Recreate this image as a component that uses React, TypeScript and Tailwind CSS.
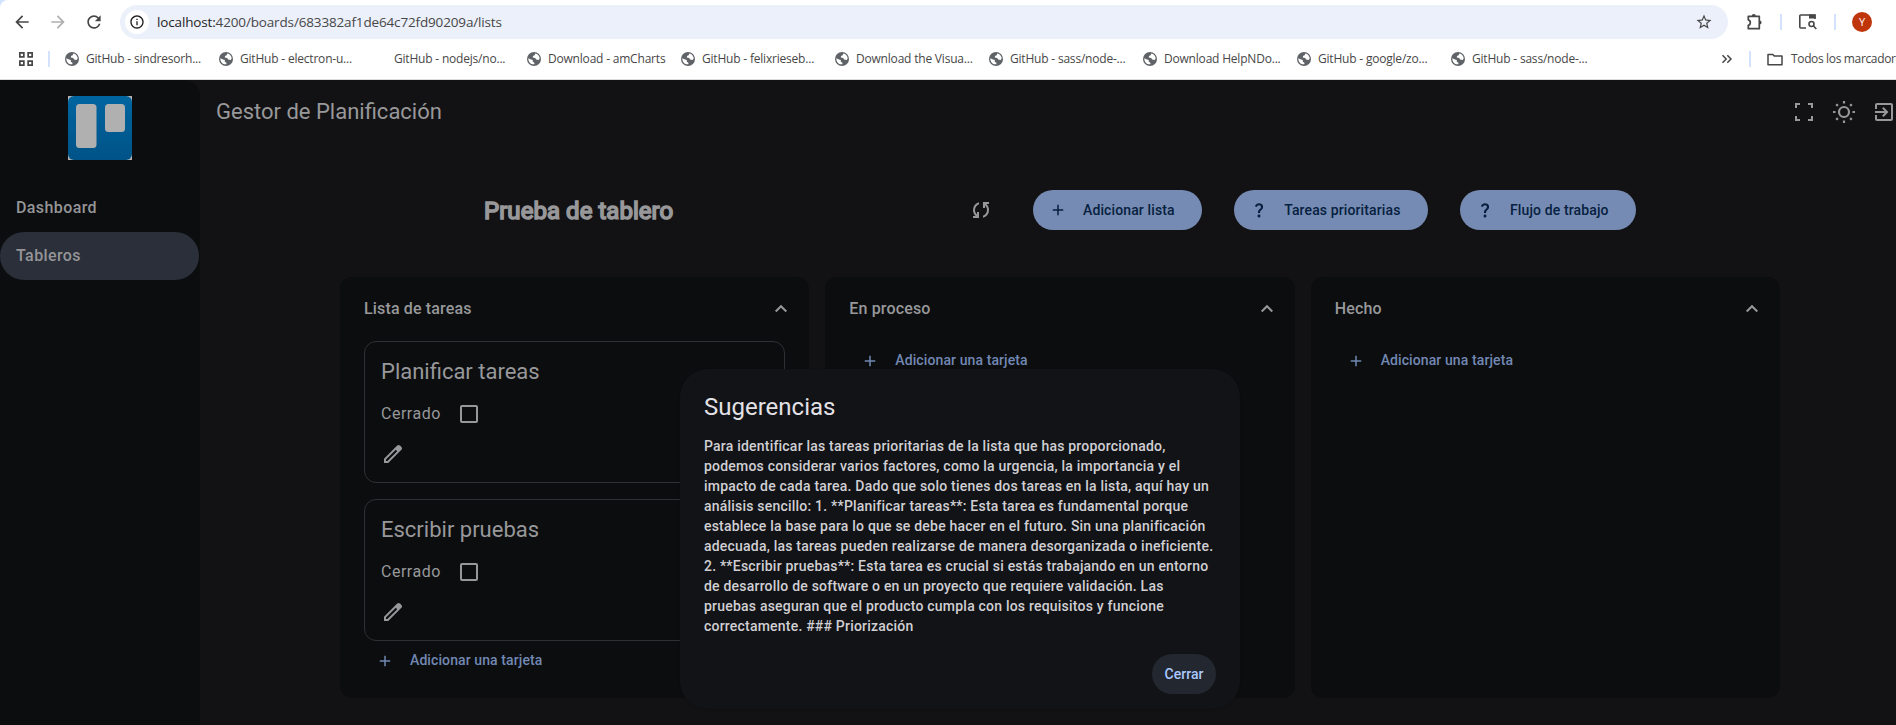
import React from "react";
import {
  MdArrowBack,
  MdArrowForward,
  MdRefresh,
  MdInfoOutline,
  MdStarOutline,
  MdOutlineExitToApp,
  MdAdd,
  MdQuestionMark,
} from "react-icons/md";

const bookmarks = [
  "GitHub - sindresorh...",
  "GitHub - electron-u...",
  "GitHub - nodejs/no...",
  "Download - amCharts",
  "GitHub - felixrieseb...",
  "Download the Visua...",
  "GitHub - sass/node-...",
  "Download HelpNDo...",
  "GitHub - google/zo...",
  "GitHub - sass/node-...",
];

function Globe() {
  return (
    <svg width="14" height="14" viewBox="0 0 14 14">
      <circle cx="7" cy="7" r="7" fill="#5f6368" />
      <path d="M1.300 6.200 4 7.500l1.800.6v1.700l1.600.9v1.600C4 12.700 1.200 10.200 1.300 6.200Z" fill="#fff" />
      <path d="M8.300 1.500 7.600 3.200 6 4 5.800 5.600l2.400.3.9 1.700 2.600.4 1-1.400C12.600 4 10.800 1.800 8.300 1.500Z" fill="#fff" />
    </svg>
  );
}

function Puzzle() {
  return (
    <svg width="18" height="18" viewBox="0 0 18 18" fill="none" stroke="#474747" strokeWidth="1.700" strokeLinejoin="round">
      <path d="M2.300 3.300h11v12.400h-11v-3.400c2.700-.6 2.700-4.900 0-5.500z" />
      <path d="M5.700 3.200a2.100 2.100 0 0 1 4.200 0zM13.500 7.400a2.100 2.100 0 0 1 0 4.200z" fill="#474747" stroke="none" />
    </svg>
  );
}

function Chevrons() {
  return (
    <svg width="12" height="12" viewBox="0 0 12 12" fill="none" stroke="#474747" strokeWidth="1.500" className="shrink-0">
      <path d="m1.500 2.300 3.700 3.700-3.700 3.700M6.300 2.300l3.700 3.700-3.700 3.700" />
    </svg>
  );
}

function Folder() {
  return (
    <svg width="16" height="13" viewBox="0 0 16 13" fill="none" stroke="#474747" strokeWidth="1.500" strokeLinejoin="round">
      <path d="M1 1.500h4.800l1.600 1.600H15v8.700H1z" />
    </svg>
  );
}

function Lens() {
  return (
    <svg width="18" height="16" viewBox="0 0 18 16" fill="none" stroke="#474747" strokeWidth="1.600">
      <path d="M7 14H1.800a1 1 0 0 1-1-1V2a1 1 0 0 1 1-1H16v4" />
      <path d="M10 .5h6.500v4H10z" fill="#474747" stroke="none" />
      <circle cx="12.500" cy="10" r="2.500" />
      <path d="m14.300 11.800 3 3.200" />
    </svg>
  );
}

function Symbol({ d }: { d: string }) {
  return (
    <svg width="24" height="24" viewBox="0 0 24 24" fill="currentColor" fillRule="evenodd" className="shrink-0">
      <path d={d} />
    </svg>
  );
}

const SYNC =
  "M4 20v-2h2.750l-.4-.35q-1.225-1.225-1.787-2.662T4 12.050q0-2.775 1.663-4.937T10 4.250v2.100Q8.200 7 7.100 8.563T6 12.050q0 1.125.425 2.188T7.750 16.200l.25.25V14h2v6zm10-.25v-2.100q1.800-.65 2.900-2.212T18 11.950q0-1.125-.425-2.187T16.250 7.800L16 7.550V10h-2V4h6v2h-2.750l.4.35q1.225 1.225 1.788 2.663T20 11.950q0 2.775-1.662 4.938T14 19.750z";
const FULLSCREEN = "M3 21v-5h2v3h3v2zm13 0v-2h3v-3h2v5zM3 8V3h5v2H5v3zm16 0V5h-3V3h5v5z";
const EDIT =
  "M5 19h1.425L16.200 9.225 14.775 7.800 5 17.575zm-2 2v-4.250L16.200 3.575q.3-.275.663-.425t.762-.15.775.15.650.45L20.425 5q.3.275.438.65T21 6.400q0 .4-.137.763t-.438.662L7.250 21z";

function Sun() {
  return (
    <svg width="24" height="24" viewBox="0 0 24 24" fill="none" stroke="currentColor" strokeWidth="2.200">
      <circle cx="12" cy="12" r="5" />
      <path d="M12 1v2.500M12 20.500V23M1 12h2.500M20.500 12H23M4.200 4.200l1.700 1.700M18.100 18.100l1.700 1.700M4.200 19.800l1.700-1.700M18.100 5.900l1.700-1.700" />
    </svg>
  );
}

function Browser() {
  return (
    <header className="h-20 shrink-0 bg-[#d3e3fd] font-['Open_Sans','Noto_Sans',sans-serif] text-[#474747]">
      <div className="h-20 overflow-hidden rounded-tl-lg border-b border-[#d9dbde] bg-white">
        <div className="flex h-[39px] items-end">
          <div className="flex h-[34px] w-[120px] shrink-0 items-center pl-3">
            <MdArrowBack size={20} />
            <MdArrowForward size={20} className="ml-4 text-[#b0b0b0]" />
            <MdRefresh size={20} className="ml-4" />
          </div>
          <div className="flex h-[34px] w-[1608px] shrink-0 items-center rounded-full bg-[#ebf0fa] pr-[15px] pl-[5px]">
            <span className="flex size-6 items-center justify-center rounded-full bg-white text-[#1f1f1f]">
              <MdInfoOutline size={16} />
            </span>
            <span className="ml-2 text-[13.500px] tracking-[-0.15px]">
              <span className="text-[#1f1f1f]">localhost:</span>4200/boards/683382af1de64c72fd90209a/lists
            </span>
            <MdStarOutline size={18} className="ml-auto" />
          </div>
          <div className="flex h-[34px] shrink-0 items-center pl-[18px]">
            <Puzzle />
            <i className="ml-4 h-4 w-0.5 bg-[#d3e3fd]" />
            <span className="ml-[17px]">
              <Lens />
            </span>
            <i className="ml-[17px] h-4 w-0.5 bg-[#d3e3fd]" />
            <b className="ml-4 flex size-5 items-center justify-center rounded-full bg-[#bf360c] text-[11px] font-normal text-white">
              Y
            </b>
          </div>
        </div>
        <div className="flex h-10 items-center text-[12px] tracking-[-0.2px] whitespace-nowrap">
          <svg width="14" height="14" viewBox="0 0 14 14" className="ml-[19px] shrink-0" fill="none" stroke="#474747" strokeWidth="1.700">
            <path d="M.85.85h4v4h-4zM9.150.85h4v4h-4zM.85 9.150h4v4h-4zM9.150 9.150h4v4h-4z" />
          </svg>
          <i className="ml-[15px] h-4 w-0.5 shrink-0 bg-[#d3e3fd]" />
          <div className="ml-[15px] flex shrink-0">
            {bookmarks.map((name, i) => (
              <div key={i} className="flex w-[154px] shrink-0 items-center gap-[7px]">
                <span className="w-[14px] shrink-0">{i !== 2 && <Globe />}</span>
                {name}
              </div>
            ))}
          </div>
          <span className="ml-[116px] w-[14px] shrink-0">
            <Chevrons />
          </span>
          <i className="ml-[14px] h-4 w-0.5 shrink-0 bg-[#d3e3fd]" />
          <span className="ml-4 shrink-0">
            <Folder />
          </span>
          <span className="ml-2 shrink-0 tracking-[-0.35px]">Todos los marcadores</span>
        </div>
      </div>
    </header>
  );
}

function Sidebar() {
  return (
    <aside className="flex w-[200px] shrink-0 flex-col rounded-tr-2xl bg-[#0b0d0f] text-[16px] font-medium tracking-[0.4px]">
      <svg width="64" height="64" viewBox="0 0 64 64" className="mt-4 ml-[68px]">
        <defs>
          <linearGradient id="tile" x1="0" y1="0" x2="0" y2="1">
            <stop offset="0" stopColor="#0065a0" />
            <stop offset="1" stopColor="#005387" />
          </linearGradient>
        </defs>
        <rect width="64" height="64" fill="#b2b2b2" />
        <rect width="64" height="64" rx="6" fill="url(#tile)" />
        <rect x="8" y="8" width="20.500" height="44" rx="3.500" fill="#b0b0b0" />
        <rect x="37" y="8" width="20" height="28" rx="3.500" fill="#b0b0b0" />
      </svg>
      <a className="mt-6 flex h-12 items-center pl-4 text-[#959597]">Dashboard</a>
      <a className="flex h-12 w-[199px] items-center rounded-full bg-[#2a2f3a] pl-4 text-[#959597]">Tableros</a>
    </aside>
  );
}

function AddCard() {
  return (
    <div className="flex h-[39px] items-center pl-3 text-[14px] font-medium tracking-[0.1px] text-[#7288b3]">
      <MdAdd size={18} />
      <span className="ml-4 pb-px">Adicionar una tarjeta</span>
    </div>
  );
}

function TaskCard({ title }: { title: string }) {
  return (
    <article className="mb-4 h-[142px] rounded-xl border border-[#2e3033] pt-4 pl-4">
      <h3 className="text-[22px] leading-7 text-[#98989a]">{title}</h3>
      <div className="mt-4 flex h-6 items-center text-[16px] tracking-[0.5px]">
        Cerrado
        <span className="ml-[19px] size-[18px] rounded-[2px] border-2 border-[#98989a]" />
      </div>
      <div className="mt-4">
        <Symbol d={EDIT} />
      </div>
    </article>
  );
}

function List({ title, tasks }: { title: string; tasks: string[] }) {
  return (
    <section className="flex-1 rounded-xl bg-[#0b0d0f] px-6">
      <div className="flex h-16 items-center justify-between text-[16px] font-medium tracking-[0.15px]">
        {title}
        <svg width="14" height="10" viewBox="0 0 14 10" fill="none" stroke="currentColor" strokeWidth="2" className="-mr-[3px]">
          <path d="M1.700 7.500 7 2.200l5.300 5.300" />
        </svg>
      </div>
      {tasks.map((t) => (
        <TaskCard key={t} title={t} />
      ))}
      <div className={tasks.length ? "-mt-4" : ""}>
        <AddCard />
      </div>
    </section>
  );
}

function Action({ icon, label }: { icon: React.ReactNode; label: string }) {
  return (
    <button className="flex h-10 items-center rounded-full bg-[#768bb3] pr-[27.5px] pl-4 text-[14px] font-medium tracking-[0.12px] text-[#06213f]">
      {icon}
      <span className="ml-4">{label}</span>
    </button>
  );
}

function Dialog() {
  return (
    <div className="absolute top-[369px] left-[680px] h-[340px] w-[560px] rounded-[28px] bg-[#121316] px-6 shadow-[0_1px_3px_rgba(0,0,0,0.12)]">
      <h2 className="pt-[22px] text-[24px] leading-8 text-[#e3e2e6]">Sugerencias</h2>
      <p className="mt-[13px] text-[14px] leading-5 font-medium tracking-[0.21px] whitespace-nowrap text-[#d0cfd4]">
        Para identificar las tareas prioritarias de la lista que has proporcionado,<br />
        podemos considerar varios factores, como la urgencia, la importancia y el<br />
        impacto de cada tarea. Dado que solo tienes dos tareas en la lista, aquí hay un<br />
        análisis sencillo: 1. **Planificar tareas**: Esta tarea es fundamental porque<br />
        establece la base para lo que se debe hacer en el futuro. Sin una planificación<br />
        adecuada, las tareas pueden realizarse de manera desorganizada o ineficiente.<br />
        2. **Escribir pruebas**: Esta tarea es crucial si estás trabajando en un entorno<br />
        de desarrollo de software o en un proyecto que requiere validación. Las<br />
        pruebas aseguran que el producto cumpla con los requisitos y funcione<br />
        correctamente. ### Priorización
      </p>
      <button className="mt-[18px] ml-auto flex h-10 w-16 items-center justify-center rounded-full bg-[#23272f] text-[14px] font-medium text-[#abc7ff]">
        Cerrar
      </button>
    </div>
  );
}

export default function App() {
  return (
    <div className="relative flex h-[725px] w-[1896px] flex-col overflow-hidden bg-[#121214] font-[Roboto,sans-serif] text-[#98989a]">
      <Browser />
      <div className="flex flex-1">
        <Sidebar />
        <main className="flex flex-1 flex-col">
          <div className="flex h-16 items-center pl-4 text-[22px]">
            <span className="pb-0.5">Gestor de Planificación</span>
            <div className="ml-auto flex gap-4">
              <Symbol d={FULLSCREEN} />
              <Sun />
              <MdOutlineExitToApp size={24} />
            </div>
          </div>
          <div className="mt-[46px] flex h-10 items-center pl-[284px]">
            <h1 className="w-[485px] pt-0.5 text-[24px] font-normal tracking-[0.05px] [-webkit-text-stroke:1.6px_#98989a]">
              Prueba de tablero
            </h1>
            <Symbol d={SYNC} />
            <div className="ml-10 flex gap-8">
              <Action icon={<MdAdd size={18} />} label="Adicionar lista" />
              <Action icon={<MdQuestionMark size={18} />} label="Tareas prioritarias" />
              <Action icon={<MdQuestionMark size={18} />} label="Flujo de trabajo" />
            </div>
          </div>
          <div className="mt-[47px] ml-[140px] flex h-[421px] w-[1440px] gap-4">
            <List title="Lista de tareas" tasks={["Planificar tareas", "Escribir pruebas"]} />
            <List title="En proceso" tasks={[]} />
            <List title="Hecho" tasks={[]} />
          </div>
        </main>
      </div>
      <Dialog />
    </div>
  );
}
